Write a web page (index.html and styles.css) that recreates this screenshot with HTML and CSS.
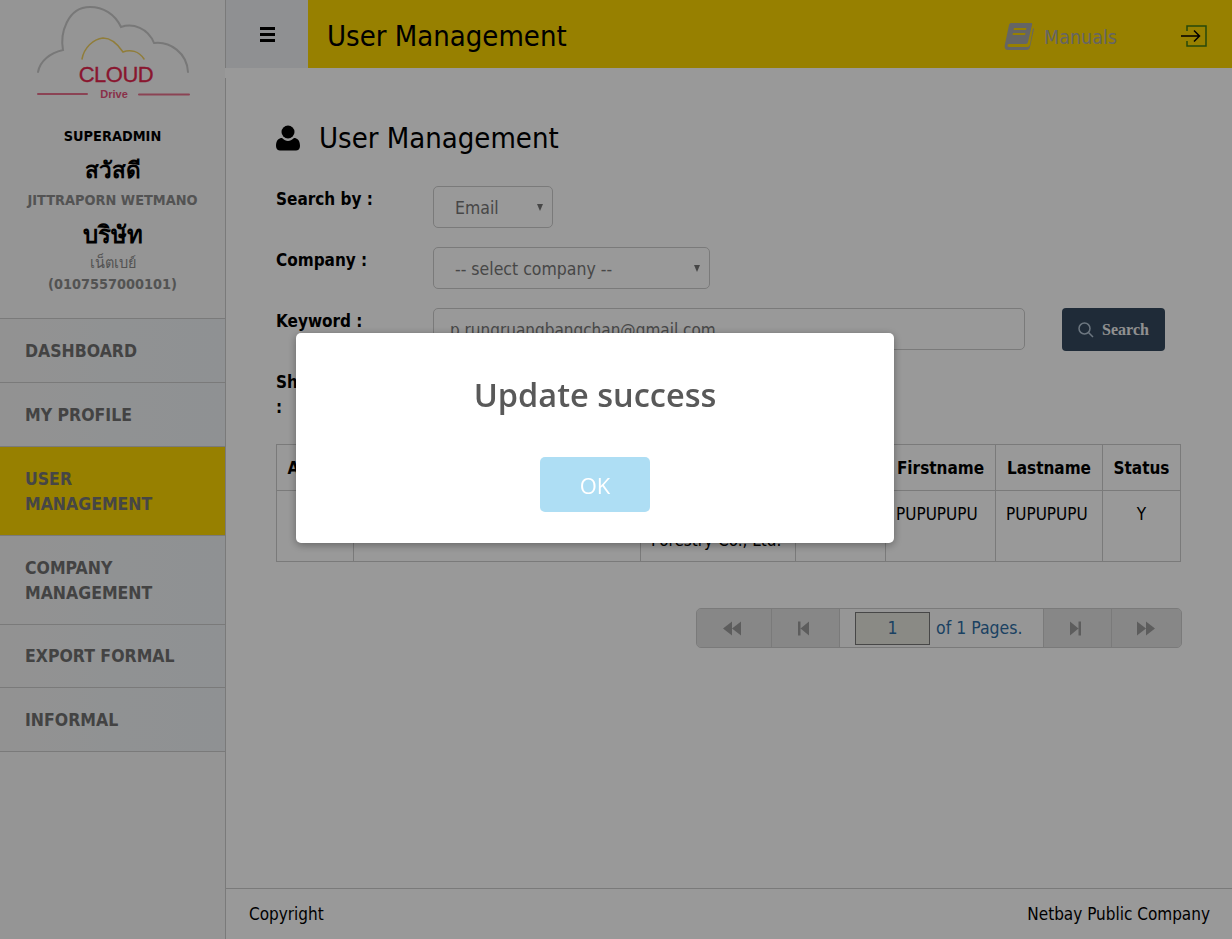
FILE: index.html
```html
<!DOCTYPE html>
<html lang="en">
<head>
<meta charset="utf-8">
<title>User Management</title>
<link rel="stylesheet" href="styles.css">
</head>
<body>
<div class="app">
  <aside class="sidebar">
    <div class="logo">
      <svg width="154" height="100" viewBox="0 0 154 100">
        <path class="cl-gray" d="M1 66C3 55 13 47 26 44C23 28 30 1 53 1C66 1 78 8 84 21C96 17 111 22 117 37C133 35 150 47 151 66" />
        <path class="cl-gold" d="M45 53C47 42 56 33 66 32C75 32 82 40 86 46C93 43 102 45 107 53" />
        <text class="cl-word" x="79" y="76" text-anchor="middle">CLOUD</text>
        <path class="cl-rule" d="M1 88H50M102 88.500H152" />
        <text class="cl-drive" x="77" y="92" text-anchor="middle">Drive</text>
      </svg>
    </div>
    <div class="who">
      <div class="role">SUPERADMIN</div>
      <div class="hi">สวัสดี</div>
      <div class="name">JITTRAPORN WETMANO</div>
      <div class="hi co">บริษัท</div>
      <div class="sub">เน็ตเบย์</div>
      <div class="name tax">(0107557000101)</div>
    </div>
    <nav class="menu">
      <a class="item">DASHBOARD</a>
      <a class="item">MY PROFILE</a>
      <a class="item active">USER<br>MANAGEMENT</a>
      <a class="item">COMPANY<br>MANAGEMENT</a>
      <a class="item short">EXPORT FORMAL</a>
      <a class="item">INFORMAL</a>
    </nav>
  </aside>
  <div class="main">
    <header class="topbar">
      <div class="burger"><span></span><span></span><span></span></div>
      <div class="bar">
        <h1>User Management</h1>
        <div class="manuals">
          <svg width="30" height="28" viewBox="0 0 30 28"><path class="book" d="M7 1H27C28 1 28.500 2 28 3L24 20C23.500 21.500 23 22 21 22H5C3 22 3 25 5 25H23C25 25 25.500 24 26 22L29 6L30 7L26 25C25.500 27 24.500 28 22 28H4C1 28 0 25 1 22L5 3C5.300 2 6 1 7 1ZM10 6L9.500 8H22L22.500 6ZM9 11L8.500 13H21L21.500 11Z"/></svg>
          <span>Manuals</span>
        </div>
        <svg class="logout" width="26" height="22" viewBox="0 0 26 22"><path class="lo-box" d="M6 6V1H25V21H6V16"/><path class="lo-arrow" d="M0 11H18.500M13 5.500L18.500 11L13 16.500"/></svg>
      </div>
    </header>
    <main class="content">
      <h2><svg width="24" height="26" viewBox="0 0 24 26"><circle cx="12" cy="7" r="6.500"/><path d="M0 21C0 15 3 13 6 13C8 15 10 16 12 16C14 16 16 15 18 13C21 13 24 15 24 21C24 24 22 25.500 20 25.500H4C2 25.500 0 24 0 21Z"/></svg>User Management</h2>
      <form class="search">
        <label>Search by :</label>
        <div class="select s-email">Email<i></i></div>
        <label>Company :</label>
        <div class="select s-company">-- select company --<i></i></div>
        <label>Keyword :</label>
        <div class="kw-row">
          <div class="select s-keyword">p.rungruangbangchan@gmail.com</div>
          <button type="button" class="btn"><svg width="16" height="16" viewBox="0 0 16 16"><circle cx="6.500" cy="6.500" r="5.500"/><path d="M10.500 10.500L15 15"/></svg>Search</button>
        </div>
        <label class="show">Show<br>:</label>
      </form>
      <table class="grid">
        <thead>
          <tr><th class="c1">Action</th><th class="c2">Email</th><th class="c3">Company</th><th class="c4">Username</th><th class="c5">Firstname</th><th class="c6">Lastname</th><th class="c7">Status</th></tr>
        </thead>
        <tbody>
          <tr><td></td><td></td><td class="co-cell">Thai Plywood<br>Forestry Co., Ltd.</td><td></td><td>PUPUPUPU</td><td>PUPUPUPU</td><td class="ctr">Y</td></tr>
        </tbody>
      </table>
      <div class="pager">
        <span class="pg pg-first"><svg width="18" height="15" viewBox="0 0 18 14"><path d="M9 0V14L0 7ZM18 0V14L9 7Z"/></svg></span>
        <span class="pg pg-prev"><svg width="11" height="15" viewBox="0 0 11 14"><path d="M0 0H2.500V14H0ZM11 0V14L2.500 7Z"/></svg></span>
        <span class="pg-mid"><span class="pg-in">1</span>of 1 Pages.</span>
        <span class="pg pg-next"><svg width="11" height="15" viewBox="0 0 11 14"><path d="M0 0L8.500 7L0 14ZM8.500 0H11V14H8.500Z"/></svg></span>
        <span class="pg pg-last"><svg width="18" height="15" viewBox="0 0 18 14"><path d="M0 0L9 7L0 14ZM9 0L18 7L9 14Z"/></svg></span>
      </div>
    </main>
    <footer class="foot"><span>Copyright</span><span>Netbay Public Company</span></footer>
  </div>
</div>
<div class="overlay">
  <div class="modal">
    <div class="msg">Update success</div>
    <button type="button" class="ok">OK</button>
  </div>
</div>
</body>
</html>
```
FILE: styles.css
```css
* { box-sizing: border-box; }
html, body { margin: 0; height: 100%; overflow: hidden; }
body { font-family: "DejaVu Sans Condensed", "DejaVu Sans", "Noto Sans CJK SC", sans-serif; font-size: 17px; color: #000; background: #fff; }
.app { display: flex; height: 939px; }

.sidebar { width: 226px; flex: none; border-right: 1px solid #ccc; background: #f8f8f8; display: flex; flex-direction: column; }
.logo { height: 118px; padding: 6px 0 0 37px; }
.logo svg { display: block; overflow: visible; }
.cl-gray, .cl-gold, .cl-rule { fill: none; stroke-linecap: round; }
.cl-gray { stroke: #c8c8c8; stroke-width: 2; }
.cl-gold { stroke: #f0d060; stroke-width: 1.500; }
.cl-rule { stroke: #e8708c; stroke-width: 2; }
.cl-word { font: 22px "Liberation Sans", sans-serif; fill: #e5274f; letter-spacing: -0.500px; stroke: #e5274f; stroke-width: 0.300px; }
.cl-drive { font: 700 11px "Liberation Sans", sans-serif; fill: #e5527a; }
.who { text-align: center; height: 200px; font-family: "DejaVu Sans Condensed", "Noto Sans", sans-serif; font-weight: 700; }
.role { font-size: 14.400px; line-height: 18px; margin-top: 9px; color: #000; }
.hi { font-size: 22.500px; line-height: 30px; margin-top: 10px; font-family: "Noto Sans", "DejaVu Sans", sans-serif; }
.hi.co { margin-top: 9px; font-size: 24px; }
.name { font-size: 14.400px; line-height: 20px; color: #8a8a8a; margin-top: 5px; }
.sub { font-size: 14.500px; line-height: 20px; color: #8a8a8a; font-weight: 400; font-family: "Noto Sans", sans-serif; margin-top: 3px; }
.name.tax { margin-top: 2px; }
.menu { border-top: 1px solid #ccc; }
.item { display: block; padding: 20px 25px 18px; font-size: 17.500px; line-height: 25px; font-weight: 700; color: #707070; border-bottom: 1px solid #ccc; background: linear-gradient(90deg, #f4f4f4, #eef2f6); }
.item.active { background: #fcd500; color: #757575; }
.item.short { padding-top: 19px; }

.main { position: relative; flex: 1; display: flex; flex-direction: column; min-width: 0; }
.main::before { content: ""; position: absolute; left: -1px; top: 68px; width: 1px; height: 10px; background: #fff; }
.topbar { display: flex; height: 68px; flex: none; }
.burger { width: 82px; background: #eff1f4; display: flex; flex-direction: column; gap: 3px; align-items: center; justify-content: center; }
.burger span { width: 15px; height: 3px; background: #000; }
.bar { flex: 1; background: #fcd500; display: flex; align-items: center; padding: 3px 25px 0 19px; }
.bar h1 { margin: 0; font-size: 29px; font-weight: 400; flex: 1; }
.manuals { display: flex; align-items: center; gap: 10px; font-size: 19.500px; color: #a8a8a8; margin-right: 64px; }
.manuals span { padding-top: 3px; }
.book { fill: #a8a8a8; }
.logout { overflow: visible; }
.lo-box { fill: none; stroke: #3f7a10; stroke-width: 1.500; }
.lo-arrow { fill: none; stroke: #000; stroke-width: 1.500; }

.content { flex: 1; padding: 50px 51px 0 50px; }
.content h2 { display: flex; align-items: center; gap: 19px; margin: 0 0 28px; font-size: 29px; font-weight: 400; line-height: 40px; }
.search { display: grid; grid-template-columns: 157px 1fr; grid-auto-rows: 43px; row-gap: 18px; font-size: 17px; }
.search label { font-weight: 700; line-height: 25px; padding-top: 1px; }
.select { position: relative; height: 42px; border: 1px solid #ccc; border-radius: 5px; padding: 0 21px; line-height: 42px; color: #777; font-size: 17.500px; background: #fff; }
.select i { position: absolute; right: 9px; top: 17px; border-left: 3.500px solid transparent; border-right: 3.500px solid transparent; border-top: 7px solid #777; }
.s-email { width: 120px; }
.s-company { width: 277px; }
.kw-row { display: flex; gap: 37px; }
.s-keyword { width: 592px; padding-left: 16px; font-size: 17px; }
.btn { width: 103px; height: 43px; background: #34495e; border: 0; border-radius: 4px; color: #f0f0f0; font: 700 16px "Liberation Serif", serif; display: flex; align-items: center; justify-content: center; gap: 8px; }
.btn svg { fill: none; stroke: #b5c5d5; stroke-width: 1.500; }

.grid { border-collapse: collapse; table-layout: fixed; width: 904px; margin-top: 32px; }
.grid th, .grid td { border: 1px solid #ccc; font-size: 17px; }
.grid th { height: 46px; font-weight: 700; }
.grid td { height: 71px; vertical-align: top; padding: 10px 10px 0; line-height: 26px; }
.c1 { width: 77px; } .c2 { width: 287px; } .c3 { width: 155px; } .c4 { width: 90px; } .c5 { width: 110px; } .c6 { width: 107px; } .c7 { width: 78px; }
.ctr { text-align: center; }

.pager { display: flex; align-items: stretch; width: 486px; height: 40px; margin: 46px 0 0 420px; border: 1px solid #ccc; border-radius: 5px; overflow: hidden; background: #eee; }
.pg { width: 68px; background: #e2e2e2; border-right: 1px solid #ccc; display: flex; align-items: center; justify-content: center; }
.pg-first { width: 75px; padding-right: 5px; }
.pg-prev { padding-right: 4px; }
.pg-next { width: 69px; border-left: 1px solid #ccc; padding-right: 4px; }
.pg-last { width: 69px; border-right: 0; padding-right: 2px; }
.pg svg { fill: #9c9c9c; }
.pg-mid { width: 203px; background: #fbfbfb; display: flex; align-items: center; padding-left: 15px; gap: 6px; color: #2e6da4; font-size: 17.500px; }
.pg-in { width: 75px; height: 33px; border: 1px solid #777; background: #e6e6de; text-align: center; line-height: 31px; }

.foot { height: 51px; flex: none; border-top: 1px solid #ccc; display: flex; justify-content: space-between; align-items: center; padding: 0 22px 1px 23px; font-size: 17px; }

.overlay { position: fixed; inset: 0; background: rgba(0, 0, 0, .4); }
.modal { position: absolute; left: 296px; top: 333px; width: 598px; height: 210px; background: #fff; border-radius: 5px; box-shadow: 0 2px 8px rgba(0, 0, 0, .35); text-align: center; }
.msg { font: 600 32.500px/40px "Open Sans", sans-serif; color: #595959; margin-top: 42px; }
.ok { display: block; margin: 42px auto 0; width: 110px; height: 55px; border: 0; border-radius: 5px; background: #aedef4; color: #fff; font: 500 22px "Open Sans", sans-serif; }
```
